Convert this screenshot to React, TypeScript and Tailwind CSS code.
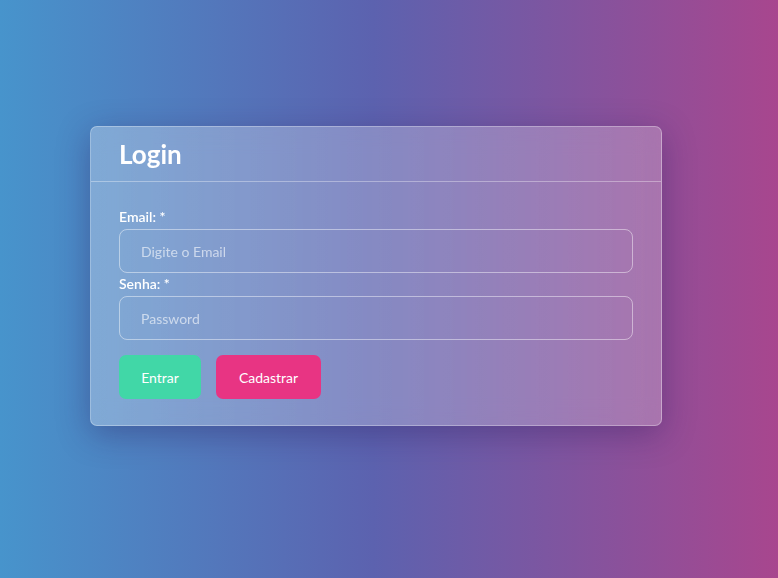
import React from "react";

export default function App() {
  return (
    <div
      className="w-full h-[578px] flex items-start justify-start bg-[linear-gradient(to_right,#4794cc,#5c62af_48%,#a8468e)] pt-[126px] pl-[90px]"
      style={{ fontFamily: "Lato, 'Noto Sans', sans-serif" }}
    >
      <div className="w-[572px] rounded-[7px] border border-white/30 bg-[linear-gradient(to_right,rgba(255,255,255,0.29),rgba(255,255,255,0.22))] shadow-[0_8px_32px_rgba(40,20,90,0.35)] backdrop-blur-md">
        <div className="h-[55px] border-b border-white/35 px-[28px] flex items-center">
          <h1 className="text-[26px] font-bold text-white leading-none">Login</h1>
        </div>
        <div className="px-[28px] pt-[26px] pb-[26px]">
          <label className="block text-[14px] font-semibold text-white leading-[17px] mb-[4px]">Email: *</label>
          <input
            className="block w-full h-[44px] rounded-[8px] border border-white/45 bg-transparent px-[21px] text-[14px] text-white placeholder:text-white/60 outline-none"
            placeholder="Digite o Email"
          />
          <label className="block text-[14px] font-semibold text-white leading-[17px] mt-[2px] mb-[4px]">Senha: *</label>
          <input
            type="password"
            className="block w-full h-[44px] rounded-[8px] border border-white/45 bg-transparent px-[21px] text-[14px] text-white placeholder:text-white/60 outline-none"
            placeholder="Password"
          />
          <div className="flex gap-[15px] mt-[15px]">
            <button className="h-[44px] w-[82px] rounded-[7px] bg-[#41d7a7] text-white text-[14px]">Entrar</button>
            <button className="h-[44px] w-[105px] rounded-[7px] bg-[#e83483] text-white text-[14px]">Cadastrar</button>
          </div>
        </div>
      </div>
    </div>
  );
}
